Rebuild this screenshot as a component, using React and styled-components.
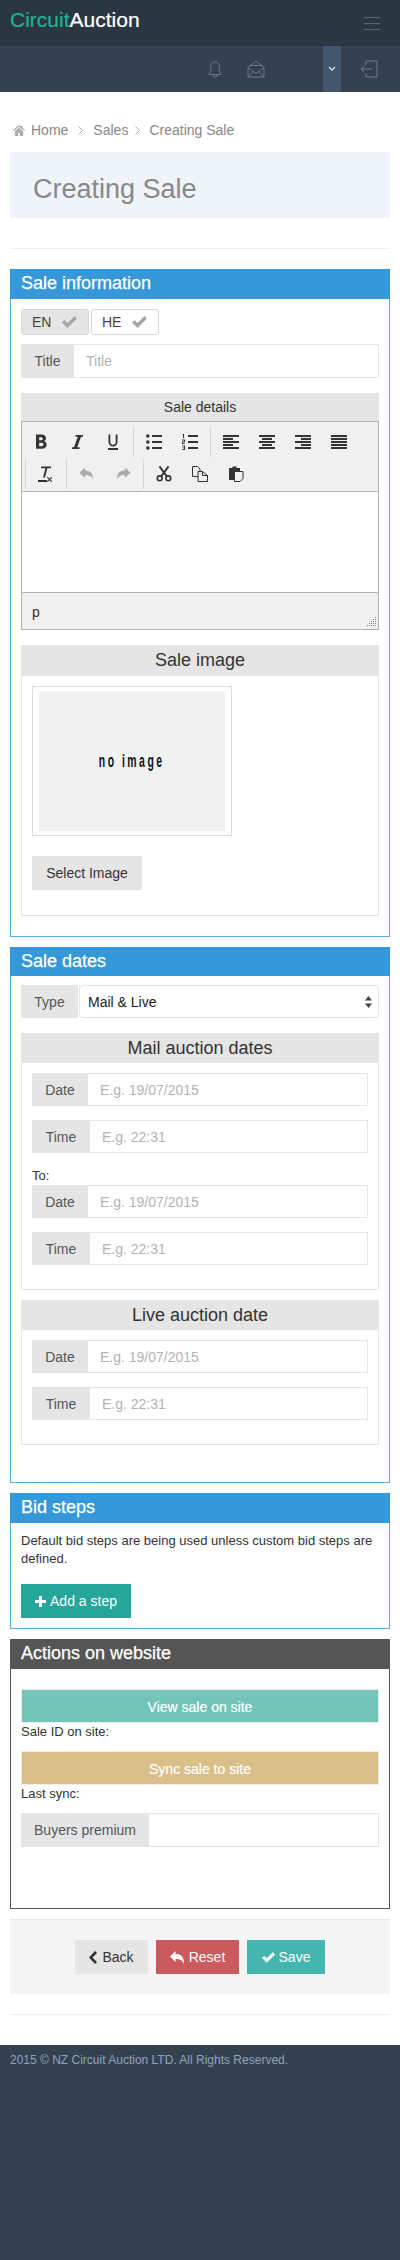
import React from "react";
import styled, { createGlobalStyle } from "styled-components";

const Global = createGlobalStyle`
  * { box-sizing: border-box; }
  html, body { margin: 0; padding: 0; background: #364150; }
  body {
    font-family: "Liberation Sans", Arial, sans-serif;
    font-size: 14px;
    line-height: 20px;
    color: #333;
  }
`;

const TopBar = styled.div`
  height: 46px;
  background: #2b3643;
  display: flex;
  justify-content: space-between;
  padding: 0 20px 0 10px;
`;

const Logo = styled.div`
  font-size: 21px;
  line-height: 40px;
  color: #fff;
  -webkit-text-stroke: 0.2px currentColor;
  span { color: #1fb396; }
`;

const Burger = styled.div`
  width: 16px;
  height: 13px;
  margin-top: 17px;
  border-top: 1px solid #5a6775;
  border-bottom: 1px solid #5a6775;
  position: relative;
  &::before {
    content: "";
    position: absolute;
    left: 0;
    right: 0;
    top: 5px;
    height: 1px;
    background: #5a6775;
  }
`;

const SubBar = styled.div`
  height: 46px;
  background: #364150;
  display: flex;
  justify-content: flex-end;
  align-items: stretch;
`;

const BarIcon = styled.div`
  display: flex;
  align-items: center;
  justify-content: center;
  width: 18px;
  margin-left: ${(p) => p.$ml || 0}px;
  margin-right: ${(p) => p.$mr || 0}px;
  background: ${(p) => p.$bg || "transparent"};
`;

const Content = styled.div`
  background: #fff;
  padding: 28px 10px 10px;
`;

const Crumbs = styled.div`
  display: flex;
  align-items: center;
  height: 20px;
  padding-left: 3px;
  color: #888;
  font-size: 14px;
`;

const Crumb = styled.span`
  display: flex;
  margin-left: ${(p) => p.$ml}px;
`;

const TitleBand = styled.h1`
  margin: 12px 0 0;
  height: 66px;
  background: #eff3fa;
  padding: 0 23px;
  font-size: 27px;
  font-weight: 400;
  line-height: 74px;
  color: #888;
`;

const Rule = styled.hr`
  border: 0;
  border-top: 1px solid #eee;
  margin: ${(p) => p.$top}px 0 20px;
  height: 0;
`;

const Panel = styled.section`
  border: 1px solid ${(p) => p.$line || "#5dade2"};
  margin-bottom: 10px;
  height: ${(p) => p.$h}px;
`;

const PanelHead = styled.h2`
  margin: -1px -1px 0;
  height: ${(p) => p.$h || 30}px;
  background: ${(p) => p.$bg || "#3498db"};
  color: #fff;
  font-size: 18px;
  line-height: 29px;
  font-weight: 400;
  padding-left: 11px;
  -webkit-text-stroke: 0.25px #fff;
`;

const PanelBody = styled.div`
  padding: ${(p) => p.$top ?? 10}px 10px 0;
`;

const LangRow = styled.div`
  display: flex;
  gap: 2px;
  height: 26px;
`;

const LangTab = styled.div`
  width: 68px;
  height: 26px;
  border: 1px solid #d6d6d6;
  border-radius: 3px;
  background: ${(p) => (p.$active ? "#e5e5e5" : "#fff")};
  font-size: 14px;
  padding-left: 10px;
  display: flex;
  align-items: center;
  gap: 11px;
  color: #444;
`;

const InputGroup = styled.div`
  display: flex;
  height: ${(p) => p.$h || 34}px;
  margin-top: ${(p) => p.$mt || 0}px;
`;

const AddOn = styled.div`
  width: ${(p) => p.$w}px;
  flex: none;
  background: #e5e5e5;
  color: #555;
  font-size: 14px;
  display: flex;
  align-items: center;
  justify-content: center;
`;

const FakeInput = styled.div`
  flex: 1;
  background: #fff;
  border: 1px solid #e5e5e5;
  border-left: 0;
  color: #b3b3b3;
  font-size: 14px;
  display: flex;
  align-items: center;
  padding-left: 12px;
`;

const SelectBox = styled.div`
  flex: 1;
  margin-left: 1px;
  border: 1px solid #e5e5e5;
  border-radius: 4px;
  color: #222;
  font-size: 14px;
  display: flex;
  align-items: center;
  justify-content: space-between;
  padding: 0 6px 0 8px;
`;

const BoxHead = styled.div`
  height: ${(p) => p.$h || 30}px;
  background: #e5e5e5;
  text-align: center;
  font-size: ${(p) => p.$size || 18}px;
  line-height: ${(p) => p.$h || 30}px;
  color: #333;
`;

const Editor = styled.div`
  margin-top: 15px;
`;

const EditorFrame = styled.div`
  border: 1px solid #b2b2b2;
`;

const Toolbar = styled.div`
  height: 70px;
  padding: 5px 0 0 1px;
  background: #f0f0f0;
  border-bottom: 1px solid #b2b2b2;
  display: flex;
  flex-direction: column;
  gap: 2px;
`;

const ToolRow = styled.div`
  height: 30px;
  display: flex;
  align-items: center;
`;

const ToolBtn = styled.div`
  width: 36px;
  height: 30px;
  flex: none;
  display: flex;
  align-items: center;
  justify-content: center;
  color: ${(p) => (p.$off ? "#aaa" : "#333")};
`;

const ToolSep = styled.div`
  width: 1px;
  height: 30px;
  flex: none;
  background: #d4d4d4;
  margin: 0 ${(p) => p.$mr ?? 2}px 0 ${(p) => p.$ml ?? 2}px;
`;

const EditArea = styled.div`
  height: 100px;
  background: #fff;
`;

const StatusBar = styled.div`
  height: 37px;
  background: #f0f0f0;
  border-top: 1px solid #b2b2b2;
  padding: 9px 0 0 10px;
  font-size: 14px;
  color: #333;
  position: relative;
`;

const Grip = styled.svg`
  position: absolute;
  right: 2px;
  bottom: 3px;
`;

const Box = styled.div`
  margin-top: ${(p) => p.$mt}px;
`;

const BoxBody = styled.div`
  border: 1px solid #e5e5e5;
  border-top: 0;
  height: ${(p) => p.$h}px;
  padding: 10px 10px 0;
`;

const Thumb = styled.div`
  width: 200px;
  height: 150px;
  border: 1px solid #ddd;
  padding: 4px 6px;
`;

const NoImage = styled.div`
  height: 140px;
  background: #f1f1f1;
  display: flex;
  align-items: center;
  justify-content: center;
  overflow: hidden;
`;

const NoImageText = styled.span`
  display: inline-block;
  white-space: nowrap;
  color: #111;
  font-size: 19px;
  font-weight: 700;
  letter-spacing: 4.5px;
  transform: scaleX(0.55);
`;

const PlainBtn = styled.div`
  display: flex;
  align-items: center;
  justify-content: center;
  gap: ${(p) => p.$gap || 4}px;
  height: 34px;
  width: ${(p) => p.$w}px;
  margin-top: ${(p) => p.$mt || 0}px;
  background: ${(p) => p.$bg || "#e5e5e5"};
  color: ${(p) => p.$fg || "#333"};
  font-size: 14px;
`;

const ToLabel = styled.div`
  font-size: 13px;
  line-height: 18px;
  height: 18px;
  margin: 14px 0 0;
`;

const BodyText = styled.p`
  margin: 0;
  font-size: 13px;
  line-height: 18px;
  color: #333;
`;

const SiteBtn = styled.div`
  height: 34px;
  background: ${(p) => p.$bg};
  border: 1px solid #eee;
  color: #fff;
  text-align: center;
  font-size: 14px;
  line-height: 34px;
  margin-top: ${(p) => p.$mt}px;
  -webkit-text-stroke: 0.2px #fff;
`;

const Note = styled.div`
  font-size: 13px;
  line-height: 18px;
  height: 18px;
`;

const FormActions = styled.div`
  height: 75px;
  background: #f4f4f4;
  border-top: 1px solid #e7e7e7;
  display: flex;
  justify-content: center;
  align-items: flex-start;
  gap: 8px;
  padding-top: 20px;
`;

const Footer = styled.footer`
  height: 215px;
  background: #364150;
  padding: 5px 10px;
  color: #8ea3bd;
  font-size: 12px;
  line-height: 20px;
`;

const Check = ({ w = 15, h = 12, color = "#a6a6a6" }) => (
  <svg width={w} height={h} viewBox="0 0 15 12">
    <path d="M0 6.500 2.500 4 5.500 7 12.500 0 15 2.500 5.500 12Z" fill={color} />
  </svg>
);

const Stroke = ({ children, color = "#6c7b90" }) => (
  <svg width="18" height="18" viewBox="0 0 18 18" fill="none" stroke={color} strokeWidth="1">
    {children}
  </svg>
);

const Glyph = ({ d, children, w = 16, h = 16 }) => (
  <svg width={w} height={h} viewBox={`0 0 ${w} ${h}`} fill="currentColor" fillRule="evenodd">
    {d && <path d={d} />}
    {children}
  </svg>
);

const Bars = ({ rows }) => (
  <Glyph w={16} h={14}>
    {rows.map((r, i) => (
      <rect key={i} x={r[0]} y={i * 3} width={r[1]} height="2" />
    ))}
  </Glyph>
);

const Chevron = () => (
  <svg width="5" height="9" viewBox="0 0 5 9" fill="none" stroke="#aaa">
    <path d="M.5.500l4 4-4 4" />
  </svg>
);

const DateFields = () => (
  <>
    <InputGroup $h={33}>
      <AddOn $w={56}>Date</AddOn>
      <FakeInput>E.g. 19/07/2015</FakeInput>
    </InputGroup>
    <InputGroup $mt={14} $h={33}>
      <AddOn $w={58}>Time</AddOn>
      <FakeInput>E.g. 22:31</FakeInput>
    </InputGroup>
  </>
);

const gripDots = [];
for (let r = 0; r < 5; r++) {
  for (let c = 4 - r; c < 5; c++) {
    gripDots.push(<rect key={`${r}-${c}`} x={c * 2} y={r * 2} width="1" height="1" />);
  }
}

export default function App() {
  return (
    <>
      <Global />
      <TopBar>
        <Logo>
          <span>Circuit</span>Auction
        </Logo>
        <Burger />
      </TopBar>
      <SubBar>
        <BarIcon $mr={23}>
          <Stroke>
            <path d="M3 13.500c1.300-1 1.800-2 1.800-4.500V6a4.200 4.200 0 0 1 8.400 0v3c0 2.500.5 3.500 1.800 4.500.5.500.2 1-.4 1H3.400c-.6 0-.9-.5-.4-1z" />
            <path d="M7 15a2 2 0 0 0 4 0" />
          </Stroke>
        </BarIcon>
        <BarIcon $mr={58}>
          <Stroke>
            <path d="M1 7.500 9 1l8 6.500V17H1z" />
            <path d="M1 7.500l8 6 8-6M1 17l5.500-6M17 17l-5.500-6M4 5.500h10" />
          </Stroke>
        </BarIcon>
        <BarIcon $bg="#44566c">
          <svg width="8" height="6" viewBox="0 0 8 6" fill="none" stroke="#d8dfe8" strokeWidth="1.300">
            <path d="M1 1l3 3 3-3" />
          </svg>
        </BarIcon>
        <BarIcon $ml={19} $mr={22}>
          <Stroke>
            <path d="M6 5V1h11v16H6v-4M1 9h11M4.500 5.500 1 9l3.500 3.500" />
          </Stroke>
        </BarIcon>
      </SubBar>

      <Content>
        <Crumbs>
          <svg width="12" height="11" viewBox="0 0 13 12" fill="#aaa">
            <path d="M6.500 0 0 5.500l.8 1L6.500 1.800l5.700 4.700.8-1-2.300-2V1H9v.9zM2 7v5h3.500V8.500h2V12H11V7L6.500 3z" />
          </svg>
          <Crumb $ml={6}>Home</Crumb>
          <Crumb $ml={10}><Chevron /></Crumb>
          <Crumb $ml={10}>Sales</Crumb>
          <Crumb $ml={7}><Chevron /></Crumb>
          <Crumb $ml={9}>Creating Sale</Crumb>
        </Crumbs>
        <TitleBand>Creating Sale</TitleBand>
        <Rule $top={30} />

        <Panel $h={668}>
          <PanelHead>Sale information</PanelHead>
          <PanelBody>
            <LangRow>
              <LangTab $active>EN <Check /></LangTab>
              <LangTab>HE <Check /></LangTab>
            </LangRow>
            <InputGroup $mt={9}>
              <AddOn $w={53}>Title</AddOn>
              <FakeInput>Title</FakeInput>
            </InputGroup>
            <Editor>
              <BoxHead $h={28} $size={14}>Sale details</BoxHead>
              <EditorFrame>
                <Toolbar>
                  <ToolRow>
                    <ToolBtn>
                      <Glyph d="M3 .500h5.500c2.800 0 4.500 1.400 4.500 3.700 0 1.400-.8 2.500-2 3 1.600.4 2.700 1.600 2.700 3.400 0 2.600-2 4.200-5 4.200H3zm3.200 2.700v3h2c1 0 1.600-.6 1.600-1.500s-.6-1.500-1.700-1.500zm0 5.600v3.400h2.400c1.200 0 1.900-.7 1.900-1.700s-.7-1.700-1.900-1.700z" />
                    </ToolBtn>
                    <ToolBtn>
                      <Glyph d="M6.500 1H14v1.700h-2L8.200 13.300h2.300V15H3v-1.700h2L8.800 2.700H6.500z" />
                    </ToolBtn>
                    <ToolBtn>
                      <Glyph>
                        <path d="M3.500 .500h1.800V8a2.700 2.700 0 0 0 5.400 0V.500h1.800V8a4.500 4.500 0 0 1-9 0z" />
                        <rect x="3" y="14" width="10" height="2" />
                      </Glyph>
                    </ToolBtn>
                    <ToolSep />
                    <ToolBtn>
                      <Glyph>
                        <circle cx="1.800" cy="2" r="1.800" />
                        <circle cx="1.800" cy="8" r="1.800" />
                        <circle cx="1.800" cy="14" r="1.800" />
                        <rect x="6" y="1" width="10" height="2" />
                        <rect x="6" y="7" width="10" height="2" />
                        <rect x="6" y="13" width="10" height="2" />
                      </Glyph>
                    </ToolBtn>
                    <ToolBtn>
                      <Glyph>
                        <path d="M.5 0H2v4H1V1H.5zM0 5.500h3v2.700H1v1h2v.8H0V7.500h2v-1H0zM0 11.500h3V16H0v-.8h2v-1H.6v-.7H2v-1.200H0z" />
                        <rect x="6" y="1" width="10" height="2" />
                        <rect x="6" y="7" width="10" height="2" />
                        <rect x="6" y="13" width="10" height="2" />
                      </Glyph>
                    </ToolBtn>
                    <ToolSep />
                    <ToolBtn><Bars rows={[[0, 16], [0, 10], [0, 16], [0, 10], [0, 16]]} /></ToolBtn>
                    <ToolBtn><Bars rows={[[0, 16], [3, 10], [0, 16], [3, 10], [0, 16]]} /></ToolBtn>
                    <ToolBtn><Bars rows={[[0, 16], [6, 10], [0, 16], [6, 10], [0, 16]]} /></ToolBtn>
                    <ToolBtn><Bars rows={[[0, 16], [0, 16], [0, 16], [0, 16], [0, 16]]} /></ToolBtn>
                  </ToolRow>
                  <ToolRow>
                    <ToolSep $mr={1} />
                    <ToolBtn>
                      <Glyph>
                        <path d="M4 .500h10v1.800h-3.600L8 11.500H6l2.400-9.200H4z" />
                        <rect x="1" y="14" width="9" height="2" />
                        <path d="M10.700 10.800l1.900 1.900 1.900-1.900.8.8-1.900 1.900 1.900 1.900-.8.8-1.900-1.900-1.900 1.900-.8-.8 1.900-1.900-1.900-1.900z" />
                      </Glyph>
                    </ToolBtn>
                    <ToolSep $ml={3} />
                    <ToolBtn $off>
                      <Glyph d="M6 1.500v3c5 0 8 2.500 8 9-1.500-3.500-4-4.500-8-4.500v3L.5 6.800z" />
                    </ToolBtn>
                    <ToolBtn $off>
                      <Glyph d="M10 1.500v3c-5 0-8 2.500-8 9 1.500-3.500 4-4.500 8-4.500v3l5.500-5.200z" />
                    </ToolBtn>
                    <ToolSep />
                    <ToolBtn>
                      <svg width="16" height="16" viewBox="0 0 16 16" fill="none" stroke="#333" strokeWidth="2">
                        <path d="M3.500.5 11 10.500M12.500.5 5 10.500" />
                        <circle cx="3.700" cy="12.300" r="2.400" strokeWidth="1.600" />
                        <circle cx="12.300" cy="12.300" r="2.400" strokeWidth="1.600" />
                      </svg>
                    </ToolBtn>
                    <ToolBtn>
                      <svg width="16" height="16" viewBox="0 0 16 16" fill="none" stroke="#333">
                        <path d="M.5.500h5L8 3v7.500H.5z" />
                        <path d="M6 5.500h4.500l5 4v6H6z" fill="#f0f0f0" />
                        <path d="M10.500 5.500V9.500h5" />
                      </svg>
                    </ToolBtn>
                    <ToolBtn>
                      <svg width="16" height="16" viewBox="0 0 16 16">
                        <path d="M1 2h3.500V.5h4V2H12v4H7v8H1z" fill="#333" />
                        <path d="M6.500 5.500h8.500v7l-3 3H6.500z" fill="#f0f0f0" stroke="#333" />
                      </svg>
                    </ToolBtn>
                  </ToolRow>
                </Toolbar>
                <EditArea />
                <StatusBar>
                  p
                  <Grip width="9" height="9" viewBox="0 0 9 9" fill="#888">{gripDots}</Grip>
                </StatusBar>
              </EditorFrame>
            </Editor>
            <Box $mt={15}>
              <BoxHead $h={31}>Sale image</BoxHead>
              <BoxBody $h={240}>
                <Thumb>
                  <NoImage><NoImageText>no image</NoImageText></NoImage>
                </Thumb>
                <PlainBtn $w={110} $mt={20}>Select Image</PlainBtn>
              </BoxBody>
            </Box>
          </PanelBody>
        </Panel>

        <Panel $h={536}>
          <PanelHead $h={29}>Sale dates</PanelHead>
          <PanelBody $top={9}>
            <InputGroup $h={33}>
              <AddOn $w={57}>Type</AddOn>
              <SelectBox>
                Mail &amp; Live
                <svg width="7" height="12" viewBox="0 0 7 12" fill="#444">
                  <path d="M3.500 0 7 4.500H0zM3.500 12 0 7.500h7z" />
                </svg>
              </SelectBox>
            </InputGroup>
            <Box $mt={15}>
              <BoxHead>Mail auction dates</BoxHead>
              <BoxBody $h={227}>
                <DateFields />
                <ToLabel>To:</ToLabel>
                <DateFields />
              </BoxBody>
            </Box>
            <Box $mt={10}>
              <BoxHead>Live auction date</BoxHead>
              <BoxBody $h={115}>
                <DateFields />
              </BoxBody>
            </Box>
          </PanelBody>
        </Panel>

        <Panel $h={136}>
          <PanelHead>Bid steps</PanelHead>
          <PanelBody $top={9}>
            <BodyText>Default bid steps are being used unless custom bid steps are defined.</BodyText>
            <PlainBtn $w={110} $mt={16} $bg="#26a69a" $fg="#fff">
              <svg width="11" height="11" viewBox="0 0 11 11" fill="#fff">
                <path d="M4 0h3v4h4v3H7v4H4V7H0V4h4z" />
              </svg>
              Add a step
            </PlainBtn>
          </PanelBody>
        </Panel>

        <Panel $h={270} $line="#555">
          <PanelHead $bg="#555">Actions on website</PanelHead>
          <PanelBody $top={20}>
            <SiteBtn $mt={0} $bg="#73c4b9">View sale on site</SiteBtn>
            <Note>Sale ID on site:</Note>
            <SiteBtn $mt={10} $bg="#d9c089">Sync sale to site</SiteBtn>
            <Note>Last sync:</Note>
            <InputGroup $mt={10}>
              <AddOn $w={128}>Buyers premium</AddOn>
              <FakeInput />
            </InputGroup>
          </PanelBody>
        </Panel>

        <FormActions>
          <PlainBtn $w={73} $gap={5}>
            <svg width="8" height="13" viewBox="0 0 8 13" fill="#333">
              <path d="M6 0 8 2 3.500 6.500 8 11l-2 2L0 6.500z" />
            </svg>
            Back
          </PlainBtn>
          <PlainBtn $w={83} $gap={5} $bg="#cb5a5e" $fg="#fff">
            <svg width="14" height="13" viewBox="0 0 14 13" fill="#fff">
              <path d="M5.500 0v3C11 3 14 5.500 14 13c-1.500-4-4-5-8.500-5v3L0 5.500z" />
            </svg>
            Reset
          </PlainBtn>
          <PlainBtn $w={78} $bg="#45b6af" $fg="#fff">
            <Check w={13} h={11} color="#fff" />
            Save
          </PlainBtn>
        </FormActions>
        <Rule $top={20} />
      </Content>
      <Footer>2015 © NZ Circuit Auction LTD. All Rights Reserved.</Footer>
    </>
  );
}
